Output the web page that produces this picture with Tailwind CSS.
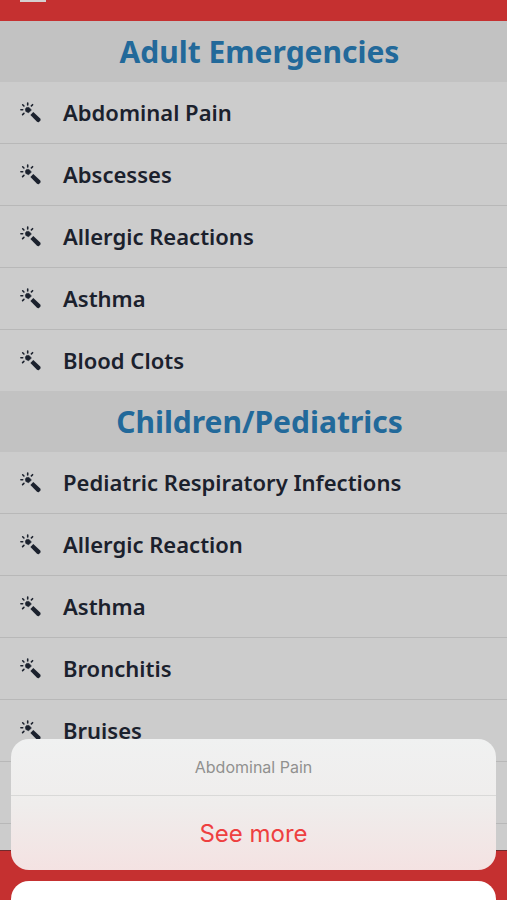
<!DOCTYPE html>
<html lang="en">
<head>
<meta charset="utf-8">
<meta name="viewport" content="width=device-width, initial-scale=1">
<title>Emergencies</title>
<script src="https://cdn.jsdelivr.net/npm/@tailwindcss/browser@4"></script>
</head>
<body class="relative flex h-screen flex-col overflow-hidden bg-[#cccccc] font-['Noto_Sans','Open_Sans',sans-serif] text-[#1b212d]">
<svg class="hidden" aria-hidden="true">
  <symbol id="wand" viewBox="0 0 22 22">
    <path d="M13.3 9.9 20.2 16.4Q21 17.4 20.4 18.6L19 20Q18 20.6 17 19.8L10.4 12.9Z" fill="currentColor"/>
    <path d="M6.6 5.4H9L11.4 8 8.6 10.8 5.8 9.4 5.4 7Z" fill="currentColor" stroke="currentColor" stroke-width=".6" stroke-linejoin="round"/>
    <path d="M7.7 1.1V2.9M2.7 2.8 3.9 4M.9 7.8H2.7M2.6 12.6 3.9 11.4M12.6 2.7 11.4 3.9" stroke="currentColor" stroke-width="1.6" stroke-linecap="round"/>
  </symbol>
</svg>

<header class="flex h-[21px] shrink-0 items-start bg-[#c53030] px-5">
  <button type="button" aria-label="Menu" class="h-0.5 w-[26px] bg-[#d5d0d0]"></button>
</header>

<main class="min-h-0 flex-1 overflow-hidden">
  <section>
    <h2 class="flex h-[61px] items-center justify-center bg-[#c2c2c2] pl-3 text-[30px] font-bold text-[#22699a]">Adult Emergencies</h2>
    <ul class="text-[22px] font-semibold">
      <li class="flex h-[62px] items-center gap-[21px] border-b border-[#b8b8b8] px-5"><svg class="size-[22px]" fill="none" aria-hidden="true"><use href="#wand"/></svg><a href="#">Abdominal Pain</a></li>
      <li class="flex h-[62px] items-center gap-[21px] border-b border-[#b8b8b8] px-5"><svg class="size-[22px]" fill="none" aria-hidden="true"><use href="#wand"/></svg><a href="#">Abscesses</a></li>
      <li class="flex h-[62px] items-center gap-[21px] border-b border-[#b8b8b8] px-5"><svg class="size-[22px]" fill="none" aria-hidden="true"><use href="#wand"/></svg><a href="#">Allergic Reactions</a></li>
      <li class="flex h-[62px] items-center gap-[21px] border-b border-[#b8b8b8] px-5"><svg class="size-[22px]" fill="none" aria-hidden="true"><use href="#wand"/></svg><a href="#">Asthma</a></li>
      <li class="flex h-[61px] items-center gap-[21px] px-5"><svg class="size-[22px]" fill="none" aria-hidden="true"><use href="#wand"/></svg><a href="#">Blood Clots</a></li>
    </ul>
  </section>
  <section>
    <h2 class="flex h-[61px] items-center justify-center bg-[#c2c2c2] pl-3 text-[30px] font-bold text-[#22699a]">Children/Pediatrics</h2>
    <ul class="text-[22px] font-semibold">
      <li class="flex h-[62px] items-center gap-[21px] border-b border-[#b8b8b8] px-5"><svg class="size-[22px]" fill="none" aria-hidden="true"><use href="#wand"/></svg><a href="#">Pediatric Respiratory Infections</a></li>
      <li class="flex h-[62px] items-center gap-[21px] border-b border-[#b8b8b8] px-5"><svg class="size-[22px]" fill="none" aria-hidden="true"><use href="#wand"/></svg><a href="#">Allergic Reaction</a></li>
      <li class="flex h-[62px] items-center gap-[21px] border-b border-[#b8b8b8] px-5"><svg class="size-[22px]" fill="none" aria-hidden="true"><use href="#wand"/></svg><a href="#">Asthma</a></li>
      <li class="flex h-[62px] items-center gap-[21px] border-b border-[#b8b8b8] px-5"><svg class="size-[22px]" fill="none" aria-hidden="true"><use href="#wand"/></svg><a href="#">Bronchitis</a></li>
      <li class="flex h-[62px] items-center gap-[21px] border-b border-[#b8b8b8] px-5"><svg class="size-[22px]" fill="none" aria-hidden="true"><use href="#wand"/></svg><a href="#">Bruises</a></li>
      <li class="h-[62px] border-b border-[#b8b8b8]"></li>
    </ul>
  </section>
</main>

<footer class="h-[50px] shrink-0 border-t border-[#702b2d] bg-[#c53030]"></footer>

<div role="dialog" aria-label="Abdominal Pain" class="absolute inset-x-[11px] bottom-0 flex flex-col gap-[11px] font-['Inter','Liberation_Sans',sans-serif]">
  <div class="overflow-hidden rounded-[18px] bg-linear-to-b from-[#f0f1f1] via-[#efedec] to-[#f4e2e2] text-center">
    <p class="flex h-[57px] items-center justify-center border-b border-[#d9d9d8] text-base text-[#91918f]">Abdominal Pain</p>
    <button type="button" class="h-[74px] w-full pt-0.5 text-2xl text-[#ee4040]">See more</button>
  </div>
  <div class="h-[19px] rounded-t-[18px] bg-white"></div>
</div>
</body>
</html>
